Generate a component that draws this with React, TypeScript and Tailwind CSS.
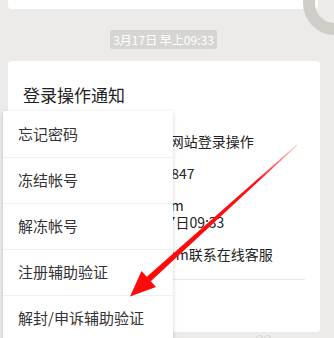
import React from "react";

export default function App() {
  const items = ["忘记密码", "冻结帐号", "解冻帐号", "注册辅助验证", "解封/申诉辅助验证"];
  return (
    <div className="relative w-[334px] h-[338px] overflow-hidden bg-[#ecebe9] font-['Noto_Sans_CJK_SC',sans-serif]">
      {/* previous card bottom */}
      <div className="ml-[8px] w-[310px] h-[9px] bg-white rounded-b-[4px]" />
      {/* timestamp */}
      <div className="mt-[21px] ml-[110px] w-[107px] h-[19px] rounded-[2px] bg-[#d6d5d1] text-white text-[12px] leading-[19px] text-center">
        3月17日 早上09:33
      </div>
      {/* main card */}
      <div className="mt-[12px] ml-[8px] w-[312px] h-[271px] bg-white rounded-[4px] pt-[22px] px-[15px]">
        <div className="text-[17px] leading-[24px] text-[#222]">登录操作通知</div>
        <div className="text-[13px] leading-[18px] text-[#9a9a9a]">3月17日</div>
        <div className="mt-[8px] text-[14px] leading-[17px] text-[#222] flex flex-col gap-[15px] whitespace-nowrap">
          <div>操作内容：QQ安全中心网站登录操作</div>
          <div>登录帐号：QQ 2751936847</div>
          <div>
            <div>登录网址：zw.aq.qq.com</div>
            <div>登录时间：2018年3月17日09:33</div>
          </div>
          <div>如有疑问请登录 kf.qq.com联系在线客服</div>
        </div>
        <div className="mt-[16px] h-px bg-[#e8e8e8] w-[282px]" />
        <div className="mt-[14px] text-[14px] text-[#222]">详情</div>
      </div>
      <div className="ml-[256px] mt-[3px] flex gap-[1px]">
        <div className="w-[7px] h-[7px] rounded-full border border-[#d0cfcb]" />
        <div className="w-[7px] h-[7px] rounded-full border border-[#d0cfcb]" />
      </div>

      {/* ring decoration */}
      <div className="absolute left-[303px] top-[-29px] w-[64px] h-[64px] rounded-full border-[12px] border-[#cfcdc8]" />

      {/* popup menu */}
      <div className="absolute left-[3px] top-[111px] w-[170px] bg-white shadow-[0_1px_4px_rgba(0,0,0,0.18)]">
        {items.map((t, i) => (
          <div
            key={t}
            className={
              "h-[46px] pl-[15px] flex items-center text-[15px] text-[#333] " +
              (i > 0 ? "border-t border-[#efefef]" : "")
            }
          >
            {t}
          </div>
        ))}
      </div>

      {/* red arrow */}
      <svg className="absolute left-0 top-0" width="334" height="338" viewBox="0 0 334 338">
        <defs>
          <linearGradient id="g" x1="297" y1="145" x2="200" y2="233" gradientUnits="userSpaceOnUse">
            <stop offset="0" stopColor="#ff4040" stopOpacity="0.3" />
            <stop offset="0.4" stopColor="#ff1010" />
            <stop offset="1" stopColor="#ff0a0a" />
          </linearGradient>
        </defs>
        <polygon points="297.2,145.4 296.8,144.6 146.5,277 150.5,281.4" fill="url(#g)" />
        <polygon points="130,296.5 141.5,271 156,287" fill="#ff0a0a" />
      </svg>
    </div>
  );
}
